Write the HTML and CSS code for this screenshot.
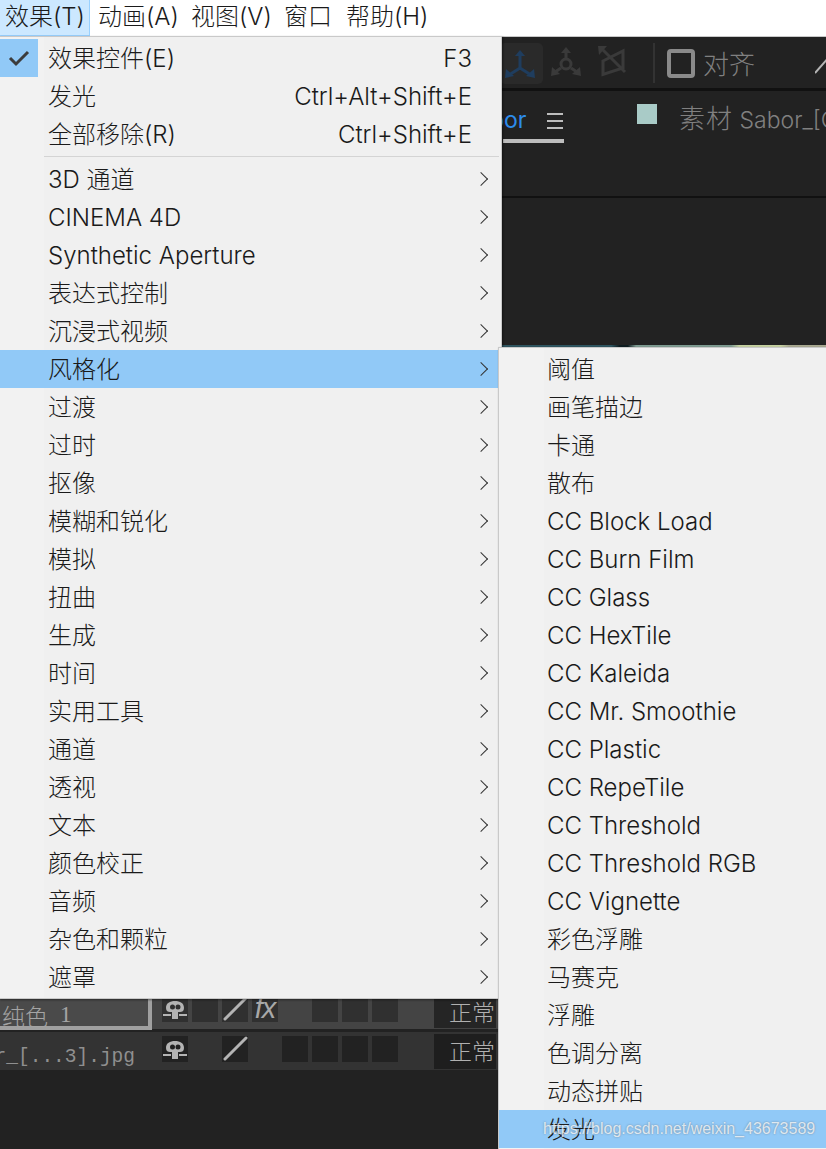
FILE: index.html
```html
<!DOCTYPE html>
<html lang="zh-CN">
<head>
<meta charset="utf-8">
<title>效果菜单</title>
<link rel="stylesheet" href="styles.css">
</head>
<body>
<div class="app">
  <nav class="menubar">
    <span class="top-item active">效果(T)</span>
    <span class="top-item">动画(A)</span>
    <span class="top-item">视图(V)</span>
    <span class="top-item">窗口</span>
    <span class="top-item">帮助(H)</span>
  </nav>
  <div class="workspace">
    <div class="toolbar">
      <span class="tool selected">
        <svg width="40" height="41" viewBox="0 0 40 41"><g fill="none" stroke="#1f3d5e" stroke-width="3"><path d="M20 12V25M20 25L9 32M20 25L31 32"/></g><g fill="#1f3d5e"><path d="M20 7L25 13H15Z"/><path d="M5 35L6 26L14 33Z"/><path d="M35 35L34 26L26 33Z"/></g></svg>
      </span>
      <span class="tool">
        <svg width="40" height="41" viewBox="0 0 40 41"><g fill="none" stroke="#3a3a3a" stroke-width="3"><path d="M20 8V16M15 25L9 29M25 25L31 29"/><circle cx="20" cy="21" r="5"/></g><g fill="#3a3a3a"><path d="M20 4L25 10H15Z"/><path d="M5 33L6 24L14 31Z"/><path d="M35 33L34 24L26 31Z"/></g></svg>
      </span>
      <span class="tool">
        <svg width="40" height="41" viewBox="0 0 40 41"><g fill="none" stroke="#3a3a3a" stroke-width="3"><path d="M11 18L31 8V25L11 31.500ZM10 6L33 29"/></g><path d="M6 3H15L7 12Z" fill="#3a3a3a"/></svg>
      </span>
      <span class="divider"></span>
      <span class="checkbox"></span>
      <span class="align-label">对齐</span>
      <svg class="pen" width="14" height="22" viewBox="0 0 14 22"><path d="M0 20L14 4" stroke="#b5b5b5" stroke-width="2"/></svg>
    </div>
    <div class="tabs">
      <div class="tab-current">
        <span class="tab-name">bor</span>
        <span class="burger"><i></i><i></i><i></i></span>
      </div>
      <span class="swatch"></span>
      <span class="tab-other"><span class="tab-cjk">素材</span> Sabor_[C</span>
    </div>
    <div class="comp"></div>
    <div class="footage"></div>
    <div class="timeline">
      <div class="layer first">
        <div class="layer-name boxed"><span class="name-cjk">纯色</span><span class="name-num">1</span></div>
        <div class="cells">
          <span class="cell"><svg width="26" height="26" viewBox="0 0 26 26"><path d="M4 12C4 7 8 5 13 5C18 5 22 7 22 12C22 15 20 16 18 16H16V23H10V16H8C6 16 4 15 4 12ZM8 11a2.500 2.500 0 1 0 5 0a2.500 2.500 0 1 0 -5 0ZM13.500 11a2.500 2.500 0 1 0 5 0a2.500 2.500 0 1 0 -5 0Z" fill="#b4b4b4" fill-rule="evenodd"/><path d="M1 19H9M17 19H25" stroke="#b4b4b4" stroke-width="2"/></svg></span>
          <span class="cell"></span>
          <span class="cell"><svg width="26" height="26" viewBox="0 0 26 26"><path d="M3 23L24 2" stroke="#b4b4b4" stroke-width="3" stroke-linecap="round"/></svg></span>
          <span class="cell fx">fx</span>
          <span class="cell empty"></span>
          <span class="cell"></span>
          <span class="cell"></span>
          <span class="cell"></span>
        </div>
        <div class="mode">正常</div>
      </div>
      <div class="layer second">
        <div class="layer-name"><span class="file">Sabor_[...3].jpg</span></div>
        <div class="cells">
          <span class="cell"><svg width="26" height="26" viewBox="0 0 26 26"><path d="M4 12C4 7 8 5 13 5C18 5 22 7 22 12C22 15 20 16 18 16H16V23H10V16H8C6 16 4 15 4 12ZM8 11a2.500 2.500 0 1 0 5 0a2.500 2.500 0 1 0 -5 0ZM13.500 11a2.500 2.500 0 1 0 5 0a2.500 2.500 0 1 0 -5 0Z" fill="#b4b4b4" fill-rule="evenodd"/><path d="M1 19H9M17 19H25" stroke="#b4b4b4" stroke-width="2"/></svg></span>
          <span class="cell empty"></span>
          <span class="cell"><svg width="26" height="26" viewBox="0 0 26 26"><path d="M3 23L24 2" stroke="#b4b4b4" stroke-width="3" stroke-linecap="round"/></svg></span>
          <span class="cell empty"></span>
          <span class="cell"></span>
          <span class="cell"></span>
          <span class="cell"></span>
          <span class="cell"></span>
        </div>
        <div class="mode">正常</div>
      </div>
    </div>
  </div>

  <ul class="menu main-menu">
    <li class="row checked"><span class="check"><svg width="22" height="18" viewBox="0 0 22 18"><path d="M2 9L8 15L20 3" fill="none" stroke="#3c3c3c" stroke-width="3"/></svg></span><span class="label">效果控件(E)</span><span class="key">F3</span></li>
    <li class="row"><span class="label">发光</span><span class="key">Ctrl+Alt+Shift+E</span></li>
    <li class="row"><span class="label">全部移除(R)</span><span class="key">Ctrl+Shift+E</span></li>
    <li class="sep"></li>
    <li class="row sub"><span class="label">3D 通道</span></li>
    <li class="row sub"><span class="label">CINEMA 4D</span></li>
    <li class="row sub"><span class="label">Synthetic Aperture</span></li>
    <li class="row sub"><span class="label">表达式控制</span></li>
    <li class="row sub"><span class="label">沉浸式视频</span></li>
    <li class="row sub hot"><span class="label">风格化</span></li>
    <li class="row sub"><span class="label">过渡</span></li>
    <li class="row sub"><span class="label">过时</span></li>
    <li class="row sub"><span class="label">抠像</span></li>
    <li class="row sub"><span class="label">模糊和锐化</span></li>
    <li class="row sub"><span class="label">模拟</span></li>
    <li class="row sub"><span class="label">扭曲</span></li>
    <li class="row sub"><span class="label">生成</span></li>
    <li class="row sub"><span class="label">时间</span></li>
    <li class="row sub"><span class="label">实用工具</span></li>
    <li class="row sub"><span class="label">通道</span></li>
    <li class="row sub"><span class="label">透视</span></li>
    <li class="row sub"><span class="label">文本</span></li>
    <li class="row sub"><span class="label">颜色校正</span></li>
    <li class="row sub"><span class="label">音频</span></li>
    <li class="row sub"><span class="label">杂色和颗粒</span></li>
    <li class="row sub"><span class="label">遮罩</span></li>
  </ul>

  <ul class="menu sub-menu">
    <li class="row"><span class="label">阈值</span></li>
    <li class="row"><span class="label">画笔描边</span></li>
    <li class="row"><span class="label">卡通</span></li>
    <li class="row"><span class="label">散布</span></li>
    <li class="row"><span class="label">CC Block Load</span></li>
    <li class="row"><span class="label">CC Burn Film</span></li>
    <li class="row"><span class="label">CC Glass</span></li>
    <li class="row"><span class="label">CC HexTile</span></li>
    <li class="row"><span class="label">CC Kaleida</span></li>
    <li class="row"><span class="label">CC Mr. Smoothie</span></li>
    <li class="row"><span class="label">CC Plastic</span></li>
    <li class="row"><span class="label">CC RepeTile</span></li>
    <li class="row"><span class="label">CC Threshold</span></li>
    <li class="row"><span class="label">CC Threshold RGB</span></li>
    <li class="row"><span class="label">CC Vignette</span></li>
    <li class="row"><span class="label">彩色浮雕</span></li>
    <li class="row"><span class="label">马赛克</span></li>
    <li class="row"><span class="label">浮雕</span></li>
    <li class="row"><span class="label">色调分离</span></li>
    <li class="row"><span class="label">动态拼贴</span></li>
    <li class="row hot"><span class="label">发光</span></li>
  </ul>

  <span class="watermark">https://blog.csdn.net/weixin_43673589</span>
</div>
</body>
</html>
```
FILE: styles.css
```css
* { box-sizing: border-box; }
html, body { margin: 0; padding: 0; }
body {
  width: 826px;
  height: 1149px;
  overflow: hidden;
  background: #222;
  font-family: "Inter", "Noto Sans CJK SC", sans-serif;
  font-weight: 300;
}
.app { position: relative; width: 826px; height: 1149px; overflow: hidden; }

.menubar {
  display: flex;
  height: 37px;
  background: #fff;
  border-bottom: 1px solid #c8c8c8;
  font-size: 24px;
  line-height: 34px;
  color: #1a1a1a;
  white-space: nowrap;
}
.top-item { width: 93px; height: 36px; }
.top-item:nth-child(2) { margin-left: 8px; }
.top-item:nth-child(4) { width: 62px; }
.top-item.active {
  padding-left: 5px;
  width: 90px;
  background: #cce8ff;
  border-bottom: 1px solid #99d1ff;
  border-right: 1px solid #99d1ff;
}

.toolbar {
  display: flex;
  align-items: center;
  height: 51px;
  padding-left: 500px;
  background: #222;
}
.tool { display: flex; flex-shrink: 0; width: 40px; height: 41px; margin: 1px 6px 0 0; }
.tool.selected { width: 43px; margin-right: 3px; background: #2a2a2a; border-radius: 5px; }
.divider { flex-shrink: 0; width: 2px; height: 40px; background: #333; margin-left: 15px; margin-right: 12px; }
.checkbox { flex-shrink: 0; width: 28px; height: 29px; margin-top: 2px; border: 4px solid #8a8a8a; border-radius: 4px; }
.align-label { flex-shrink: 0; margin-left: 8px; font-size: 26px; color: #808080; }
.pen { flex-shrink: 0; margin-left: 60px; margin-top: 3px; }

.tabs {
  display: flex;
  align-items: flex-start;
  height: 110px;
  padding-left: 503px;
  background: #222;
  border-top: 3px solid #111;
  border-bottom: 2px solid #111;
}
.tab-current { display: flex; flex-shrink: 0; width: 61px; height: 52px; border-bottom: 4px solid #bdbdbd; padding-top: 14px; }
.tab-name { width: 44px; margin-left: -13px; flex-shrink: 0; font-size: 23px; line-height: 30px; color: #2d8ceb; font-weight: 400; clip-path: inset(0 0 0 11px); }
.burger { display: flex; flex-direction: column; gap: 5px; padding-top: 8px; margin-left: 13px; }
.burger i { display: block; width: 16px; height: 2px; background: #bdbdbd; }
.swatch { flex-shrink: 0; width: 20px; height: 20px; margin: 13px 0 0 73px; background: #a9cbc7; }
.tab-other { flex-shrink: 0; margin: 12px 0 0 22px; font-size: 23px; line-height: 32px; color: #808080; white-space: nowrap; }
.tab-cjk { font-size: 26px; letter-spacing: 1px; }

.comp { height: 147px; background: #222; }
.footage {
  height: 647px;
  background: linear-gradient(90deg, #2e5560 0 74%, #0e1c20 75% 76%, #7d9a90 77% 88.500%, #c5d0a0 89.500% 94.500%, #a8a890 95.500%);
}

.timeline { background: #222; height: 156px; }
.layer { display: flex; align-items: flex-start; }
.layer.first { height: 37px; background: #444; }
.layer.second { height: 38px; margin-top: 3px; background: #333; }
.layer-name {
  display: flex;
  justify-content: flex-end;
  align-items: flex-end;
  flex-shrink: 0;
  width: 162px;
  height: 100%;
  overflow: hidden;
  padding-right: 27px;
  color: #8f8f8f;
  font-family: "Liberation Mono", monospace;
  white-space: nowrap;
}
.layer-name.boxed {
  justify-content: flex-start;
  padding: 0 0 0 2px;
  width: 152px;
  height: 38px;
  margin-right: 10px;
  overflow: visible;
  background: #4a4a4a;
  border-right: 4px solid #a0a0a0;
  border-bottom: 4px solid #a0a0a0;
}
.name-cjk { font-family: "Noto Sans CJK SC", sans-serif; font-size: 23px; line-height: 22px; color: #a4a4a4; }
.name-num { margin-left: 12px; font-family: "Liberation Serif", serif; font-size: 23px; line-height: 22px; color: #a4a4a4; font-weight: 400; }
.file { flex-shrink: 0; font-size: 19.500px; line-height: 26px; font-weight: 400; }
.cells { display: flex; gap: 4px; padding-top: 4px; }
.cell { display: flex; width: 26px; height: 26px; background: #303030; }
.second .cell { background: #222; }
.cell.empty, .second .cell.empty { background: transparent; }
.fx { justify-content: center; font: italic 400 29px/24px "Liberation Sans", sans-serif; color: #a8a8a8; letter-spacing: -1px; }
.mode {
  flex-shrink: 0;
  width: 62px;
  height: 35px;
  margin: 2px 0 0 36px;
  padding-left: 15px;
  background: #1e1e1e;
  font-size: 23px;
  line-height: 36px;
  color: #b0b0b0;
  white-space: nowrap;
  overflow: hidden;
}
.first .mode { margin-top: 0; height: 36px; background: #252525; line-height: 42px; }

.menu {
  position: absolute;
  margin: 0;
  padding: 2px 0;
  list-style: none;
  border: 1px solid #c9c9c9;
  box-shadow: 1px 1px 2px rgba(0, 0, 0, .45);
  font-size: 24px;
  color: #1a1a1a;
}
.main-menu { left: -1px; top: 36px; width: 503px; height: 963px; background: linear-gradient(90deg, #f2f2f2 44px, #f0f0f0 44px); }
.sub-menu { left: 498px; top: 347px; width: 330px; height: 804px; background: linear-gradient(90deg, #f2f2f2 45px, #f0f0f0 45px); }
.row { position: relative; display: flex; justify-content: space-between; height: 38px; line-height: 40px; padding: 0 29px 0 48px; white-space: nowrap; }
.sub::after {
  content: "";
  position: absolute;
  left: 476px;
  top: 14px;
  width: 9px;
  height: 9px;
  border-top: 1.6px solid #333;
  border-right: 1.6px solid #333;
  transform: rotate(45deg);
}
.hot { background: #91c9f7; }
.check {
  position: absolute;
  left: 0;
  top: 0;
  display: flex;
  align-items: center;
  justify-content: center;
  width: 38px;
  height: 38px;
  background: #91c9f7;
}
.sep { height: 1px; margin: 3px 2px 3px 44px; background: #d4d4d4; }
.watermark {
  position: absolute;
  left: 543px;
  top: 1118px;
  font-family: "Liberation Sans", sans-serif;
  font-size: 16px;
  font-weight: 400;
  line-height: 22px;
  color: rgba(255, 255, 255, .75);
  text-shadow: 0 0 2px rgba(90, 90, 90, .6);
  white-space: nowrap;
}
```
